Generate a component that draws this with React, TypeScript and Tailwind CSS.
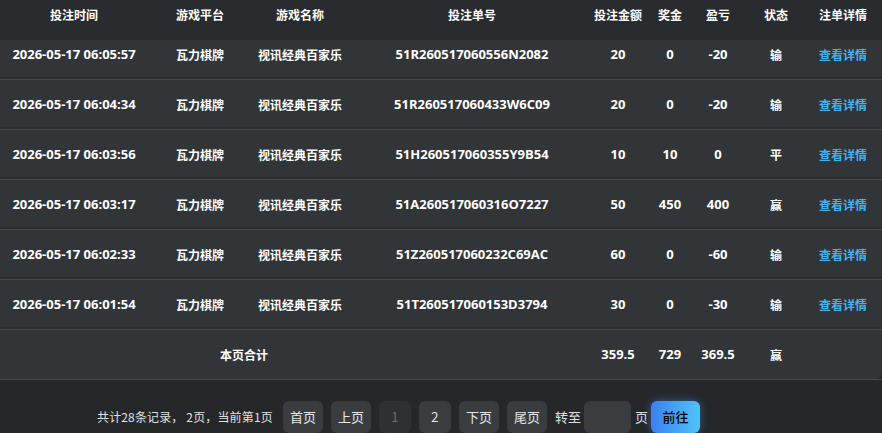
import React from "react";

const cols = "grid grid-cols-[148px_104px_96px_248px_44px_60px_36px_80px_54px]";
const latin = "font-['Open_Sans','Noto_Sans_CJK_SC',sans-serif] text-[13px] font-bold";
const cjk = "font-['Noto_Sans_CJK_SC','Noto_Sans',sans-serif] text-[12px] font-bold";

const rows = [
  ["2026-05-17 06:05:57", "51R260517060556N2082", "20", "0", "-20", "输"],
  ["2026-05-17 06:04:34", "51R260517060433W6C09", "20", "0", "-20", "输"],
  ["2026-05-17 06:03:56", "51H260517060355Y9B54", "10", "10", "0", "平"],
  ["2026-05-17 06:03:17", "51A260517060316O7227", "50", "450", "400", "赢"],
  ["2026-05-17 06:02:33", "51Z260517060232C69AC", "60", "0", "-60", "输"],
  ["2026-05-17 06:01:54", "51T260517060153D3794", "30", "0", "-30", "输"],
];

const headers = ["投注时间", "游戏平台", "游戏名称", "投注单号", "投注金额", "奖金", "盈亏", "状态", "注单详情"];

function Cell({ children, cls }: { children: React.ReactNode; cls: string }) {
  return <div className={`flex items-center justify-center whitespace-nowrap text-white ${cls}`}>{children}</div>;
}

const btn = "h-8 flex items-center justify-center rounded-md bg-[#3a3d40] text-[13px] text-[#e8e8e8]";

export default function App() {
  return (
    <div className="w-[882px] h-[433px] overflow-hidden bg-[#252729] flex flex-col font-['Noto_Sans_CJK_SC',sans-serif]">
      <div className={`${cols} relative z-10 h-10 bg-[#292c2f] pb-[10px]`}>
        {headers.map((h) => (
          <Cell key={h} cls={cjk}>{h}</Cell>
        ))}
      </div>
      <div className="-mt-[10px] bg-[#323538] rounded-r-lg">
        {rows.map((r) => (
          <div key={r[1]} className={`${cols} h-[50px] border-b border-[#45494c] shadow-[inset_0_-2px_0_#2c2f32]`}>
            <Cell cls={latin}>{r[0]}</Cell>
            <Cell cls={cjk}>瓦力棋牌</Cell>
            <Cell cls={cjk}>视讯经典百家乐</Cell>
            <Cell cls={latin}>{r[1]}</Cell>
            <Cell cls={latin}>{r[2]}</Cell>
            <Cell cls={latin}>{r[3]}</Cell>
            <Cell cls={latin}>{r[4]}</Cell>
            <Cell cls={cjk}>{r[5]}</Cell>
            <Cell cls={`${cjk} !text-[#43b3f0]`}>查看详情</Cell>
          </div>
        ))}
        <div className={`${cols} h-[50px] border-b border-[#45494c]`}>
          <div className={`col-span-3 pl-[140px] flex items-center justify-center text-white ${cjk}`}>本页合计</div>
          <div />
          <Cell cls={latin}>359.5</Cell>
          <Cell cls={latin}>729</Cell>
          <Cell cls={latin}>369.5</Cell>
          <Cell cls={cjk}>赢</Cell>
          <div />
        </div>
      </div>
      <div className="flex items-center pl-[97px] pt-[21px] text-[12px] text-[#e0e0e0]">
        <span className="whitespace-nowrap tracking-[0.15px]">共计28条记录， 2页，当前第1页</span>
        <div className="flex items-center gap-2 ml-[10px]">
          <div className={`${btn} w-10`}>首页</div>
          <div className={`${btn} w-10`}>上页</div>
          <div className={`${btn} w-8 !bg-[#2e3033] !text-[#6a6d70]`}>1</div>
          <div className={`${btn} w-8`}>2</div>
          <div className={`${btn} w-10`}>下页</div>
          <div className={`${btn} w-10`}>尾页</div>
          <span className="text-[13px] text-[#e0e0e0]">转至</span>
        </div>
        <div className="ml-[3px] h-8 w-[47px] rounded-md bg-[#3a3d40]" />
        <span className="ml-[4px] text-[13px] text-[#e0e0e0]">页</span>
        <div className="ml-[3px] h-8 w-[49px] rounded-md bg-gradient-to-r from-[#3d7ff0] to-[#4fc4f7] flex items-center justify-center shadow-[0_0_8px_rgba(64,150,255,0.5)]">
          <span className="text-[13px] font-medium text-black">前往</span>
        </div>
      </div>
    </div>
  );
}
